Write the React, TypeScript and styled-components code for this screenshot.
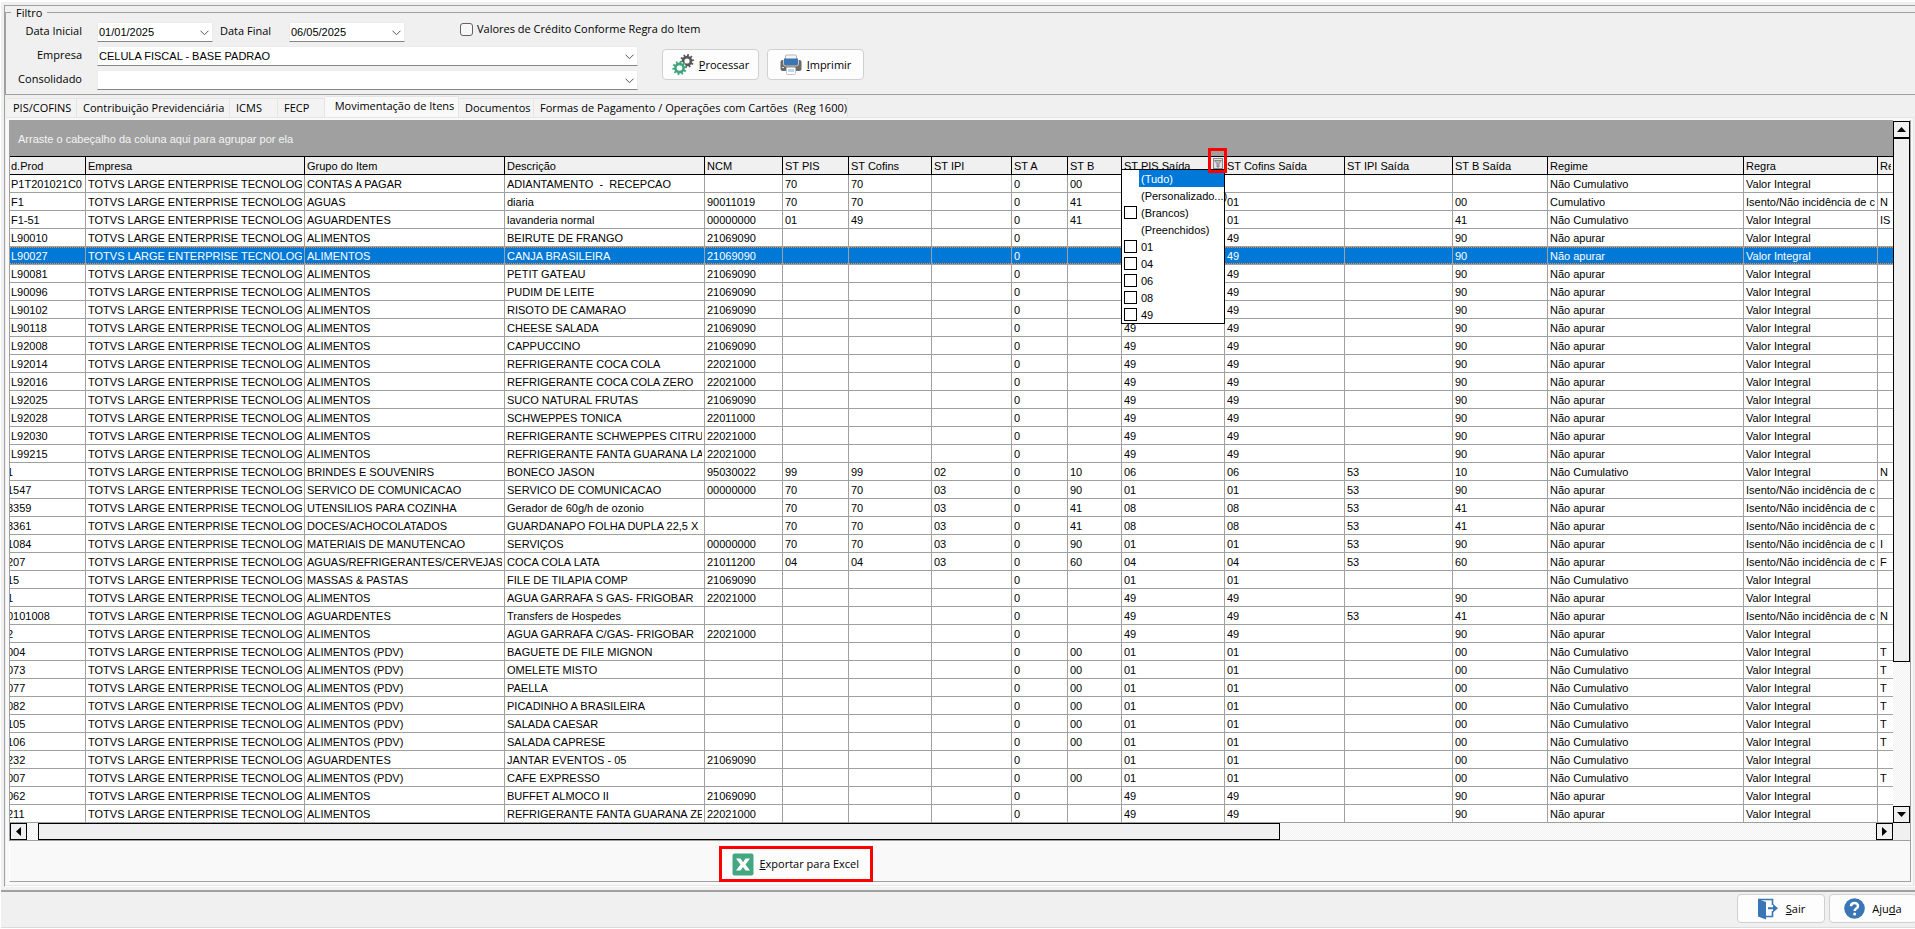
import React from "react";
import styled, { createGlobalStyle, css } from "styled-components";

const GRID_FONT = `"Liberation Sans", Arial, sans-serif`;
const UI_FONT = `"Open Sans", "Noto Sans", sans-serif`;
const LINE = "#a0a0a0";
const FACE = "#f0f0f0";

const GlobalStyle = createGlobalStyle`
  *, *::before, *::after { box-sizing: border-box; }
  body { margin: 0; background: #fff; color: #000; font: 11px/14px ${UI_FONT}; }
  button, input, select { font: inherit; color: inherit; }
`;

const Window = styled.div`
  display: flex;
  flex-direction: column;
  min-height: 100vh;
  padding: 2px 0 1px 1px;
  overflow: hidden;
`;

const Body = styled.main`
  display: flex;
  flex-direction: column;
  flex: 1;
  padding: 3px 0 3px 3px;
  background: ${FACE};
`;

const Sheet = styled.div`
  display: flex;
  flex-direction: column;
  flex: 1;
  border-top: 1px solid ${LINE};
  border-left: 1px solid ${LINE};
  border-bottom: 1px solid #fff;
`;

const FilterBox = styled.fieldset`
  margin: 0;
  padding: 3px 0 4px 5px;
  min-width: 0;
  border: 1px solid ${LINE};
  border-right: 0;
`;

const Legend = styled.legend`
  padding: 0 5px;
  line-height: 13px;
`;

const FilterGrid = styled.div`
  display: grid;
  grid-template-columns: 71px 541px auto;
  grid-template-rows: repeat(3, 20px);
  gap: 4px 15px;
  justify-content: start;
`;

const FieldLabel = styled.label`
  line-height: 18px;
  text-align: right;
  white-space: nowrap;
`;

const DateRow = styled.div`
  grid-column: 2 / 4;
  display: flex;
  align-items: flex-start;
  gap: 7px;
`;

const DateLabel = styled(FieldLabel)`
  width: 62px;
  text-align: left;
`;

const CheckLabel = styled.label`
  display: flex;
  align-items: center;
  gap: 4px;
  margin-left: 48px;
  white-space: nowrap;
`;

const CheckInput = styled.input`
  appearance: none;
  width: 13px;
  height: 13px;
  margin: 0;
  border: 1px solid #626262;
  border-radius: 3px;
  background: #f7f7f7;
`;

const SelectWrap = styled.div<{ $wide?: boolean }>`
  position: relative;
  width: ${(p) => (p.$wide ? "auto" : "116px")};
  height: 20px;
`;

const SelectInput = styled.select`
  appearance: none;
  display: block;
  width: 100%;
  height: 20px;
  padding: 0 20px 1px 1px;
  border: 1px solid #ececec;
  border-bottom-color: #868686;
  border-radius: 0;
  background: #fff;
  font: 11px/16px ${GRID_FONT};
`;

const Chevron = styled.svg`
  position: absolute;
  right: 4px;
  top: 8px;
  pointer-events: none;
`;

const ButtonRow = styled.div`
  grid-row: 2 / 4;
  grid-column: 3;
  display: flex;
  align-items: flex-start;
  gap: 8px;
  padding: 3px 0 0 9px;
`;

const PushButton = styled.button<{ $width: number; $height: number }>`
  flex: none;
  display: flex;
  align-items: center;
  justify-content: center;
  gap: 5px;
  width: ${(p) => p.$width}px;
  height: ${(p) => p.$height}px;
  padding: 0;
  border: 1px solid #d0d0d0;
  border-radius: 4px;
  background: #fdfdfd;
  white-space: nowrap;
`;

const Tabs = styled.div`
  display: flex;
  align-items: flex-end;
  height: 22px;
  padding-left: 2px;
`;

const Tab = styled.button<{ $active?: boolean; $width: number }>`
  flex: none;
  width: ${(p) => p.$width}px;
  height: ${(p) => (p.$active ? 21 : 19)}px;
  padding: 0 0 ${(p) => (p.$active ? 3 : 0)}px 6px;
  border: 1px solid #e5e5e5;
  border-left-width: 0;
  border-bottom: 0;
  background: ${(p) => (p.$active ? "#f9f9f9" : "#f3f3f3")};
  text-align: ${(p) => (p.$active ? "center" : "left")};
  white-space: pre;
`;

const TabPage = styled.section`
  display: flex;
  flex-direction: column;
  flex: 1;
  margin: 0 1px 0 1px;
  padding: 2px 2px 3px 3px;
  border: 1px solid #e5e5e5;
  border-left: 0;
  background: #f9f9f9;
`;

const GridFrame = styled.div`
  display: flex;
  border: 1px solid ${LINE};
  border-top: 0;
`;

const GridMain = styled.div`
  flex: 1;
  min-width: 0;
  display: flex;
  flex-direction: column;
`;

const GroupBar = styled.div`
  height: 36px;
  padding: 12px 8px 0;
  background: ${LINE};
  color: #f4f4f4;
  font: 11px/14px ${GRID_FONT};
`;

const Table = styled.table`
  width: 100%;
  table-layout: fixed;
  border-collapse: separate;
  border-spacing: 0;
  background: #fff;
  font: 11px/18px ${GRID_FONT};
`;

const Th = styled.th`
  position: relative;
  height: 19px;
  padding: 0;
  border-top: 1px solid #000;
  border-bottom: 1px solid #000;
  border-right: 1px solid #000;
  background: ${FACE};
  font-weight: normal;
  text-align: left;

  &:last-child { border-right: 0; }
`;

const Td = styled.td`
  height: 18px;
  padding: 0;
  border-right: 1px solid ${LINE};
  border-bottom: 1px solid ${LINE};

  &:last-child { border-right: 0; }
`;

const Row = styled.tr<{ $selected: boolean }>`
  ${(p) =>
    p.$selected &&
    css`
      color: #fff;
      td {
        background:
          repeating-linear-gradient(90deg, #ff8728 0 1px, #0078d7 1px 2px) top / 100% 1px no-repeat,
          repeating-linear-gradient(90deg, #ff8728 0 1px, #0078d7 1px 2px) bottom / 100% 1px no-repeat,
          #0078d7;
        background-clip: padding-box;
        background-origin: padding-box;
      }
    `}
`;

const CellText = styled.span<{ $first?: boolean; $cut?: boolean }>`
  display: block;
  height: 17px;
  margin: 0 2px 0 ${(p) => (p.$first ? 0 : 2)}px;
  text-indent: ${(p) => (p.$cut ? -3 : p.$first ? 1 : 0)}px;
  overflow: hidden;
  white-space: pre;
`;

const FilterMark = styled.span`
  position: absolute;
  z-index: 3;
  right: -3px;
  top: -9px;
  display: flex;
  align-items: flex-end;
  justify-content: center;
  width: 19px;
  height: 25px;
  padding-bottom: 1px;
  border: 3px solid #f00;
`;

const FilterButton = styled.button`
  display: flex;
  width: 10px;
  height: 11px;
  padding: 0;
  border: 1px solid #888;
  background: #e4e4e4;
`;

const FilterMenu = styled.div`
  position: absolute;
  z-index: 2;
  left: -1px;
  right: -1px;
  top: 12px;
  border: 1px solid #000;
  background: #fff;
`;

const FilterOption = styled.label<{ $active: boolean }>`
  display: flex;
  align-items: center;
  height: 17px;
  padding-left: 2px;
  ${(p) => p.$active && "color: #fff;"}

  span {
    flex: 1;
    height: 17px;
    padding-left: 2px;
    background: ${(p) => (p.$active ? "#0078d7" : "transparent")};
    white-space: nowrap;
  }
`;

const OptionCheck = styled.input`
  appearance: none;
  flex: none;
  width: 13px;
  height: 13px;
  margin: 0 2px 0 0;
  border: 1px solid #000;
  background: #fff;
`;

const OptionBlank = styled.i`
  flex: none;
  width: 15px;
`;

const track = css`
  background: repeating-conic-gradient(#fff 0 25%, #f0f0f0 0 50%) 0 0 / 2px 2px;
`;

const VerticalBar = styled.div`
  flex: none;
  display: flex;
  flex-direction: column;
  width: 17px;
  padding-top: 1px;
  ${track}
`;

const HorizontalBar = styled.div`
  display: flex;
  height: 17px;
  ${track}
`;

const ArrowButton = styled.button`
  flex: none;
  display: flex;
  align-items: center;
  justify-content: center;
  width: 17px;
  height: 17px;
  padding: 0;
  border: 1px solid #000;
  background: ${FACE};
`;

const VerticalTrack = styled.div`
  flex: 1;
`;

const VerticalThumb = styled.div`
  height: 78.5%;
  border: 1px solid #000;
  background: ${FACE};
`;

const HorizontalTrack = styled.div`
  flex: 1;
  padding-left: 11px;
`;

const HorizontalThumb = styled.div`
  width: 67.6%;
  height: 17px;
  border: 1px solid #000;
  background: ${FACE};
`;

const Corner = styled.div`
  height: 17px;
  background: ${FACE};
`;

const ExportBar = styled.div`
  display: flex;
  flex: 1;
  align-items: flex-end;
  min-height: 41px;
  padding-left: 37%;
  border: 1px solid ${LINE};
  border-top: 0;
  border-left-color: #fff;
`;

const ExportMark = styled.div`
  display: flex;
  margin: 0 0 -1px 5px;
  border: 3px solid #f00;
`;

const ExportButton = styled(PushButton)`
  border: 0;
  border-radius: 0;
`;

const Footer = styled.footer`
  display: flex;
  flex: none;
  justify-content: flex-end;
  align-items: center;
  height: 38px;
  padding-bottom: 2px;
  border-top: 2px solid ${LINE};
  border-bottom: 1px solid #dcdcdc;
  background: ${FACE};
`;

const FooterButtons = styled.div`
  display: flex;
  gap: 4px;
  margin-right: -2px;
`;

const FooterButton = styled(PushButton)`
  gap: 7px;
`;

const widths = [76, 219, 200, 200, 78, 66, 83, 80, 56, 54, 103, 120, 108, 95, 196, 134];

const headers = [
  "d.Prod", "Empresa", "Grupo do Item", "Descrição", "NCM", "ST PIS", "ST Cofins", "ST IPI", "ST A", "ST B",
  "ST PIS Saída", "ST Cofins Saída", "ST IPI Saída", "ST B Saída", "Regime", "Regra", "Re",
];

const COMPANY = "TOTVS LARGE ENTERPRISE TECNOLOGIA";
const NC = "Não Cumulativo";
const NA = "Não apurar";
const VI = "Valor Integral";
const IS = "Isento/Não incidência de c";

// code | group | description | NCM | PIS | Cofins | IPI | A | B | PIS out | Cofins out | IPI out | B out | regime | rule | Re
const items = [
  `P1T201021C01|CONTAS A PAGAR|ADIANTAMENTO  -  RECEPCAO||70|70||0|00|||||${NC}|${VI}|`,
  `F1|AGUAS|diaria|90011019|70|70||0|41|01|01||00|Cumulativo|${IS}|N`,
  `F1-51|AGUARDENTES|lavanderia normal|00000000|01|49||0|41|01|01||41|${NC}|${VI}|ISS`,
  ...[
    "L90010|BEIRUTE DE FRANGO|21069090",
    "L90027|CANJA BRASILEIRA|21069090",
    "L90081|PETIT GATEAU|21069090",
    "L90096|PUDIM DE LEITE|21069090",
    "L90102|RISOTO DE CAMARAO|21069090",
    "L90118|CHEESE SALADA|21069090",
    "L92008|CAPPUCCINO|21069090",
    "L92014|REFRIGERANTE COCA COLA|22021000",
    "L92016|REFRIGERANTE COCA COLA ZERO|22021000",
    "L92025|SUCO NATURAL FRUTAS|21069090",
    "L92028|SCHWEPPES TONICA|22011000",
    "L92030|REFRIGERANTE SCHWEPPES CITRUS|22021000",
    "L99215|REFRIGERANTE FANTA GUARANA LA|22021000",
  ].map((s) => {
    const [code, name, ncm] = s.split("|");
    return `${code}|ALIMENTOS|${name}|${ncm}||||0||49|49||90|${NA}|${VI}|`;
  }),
  `1|BRINDES E SOUVENIRS|BONECO JASON|95030022|99|99|02|0|10|06|06|53|10|${NC}|${VI}|N`,
  `1547|SERVICO DE COMUNICACAO|SERVICO DE COMUNICACAO|00000000|70|70|03|0|90|01|01|53|90|${NA}|${IS}|`,
  `3359|UTENSILIOS PARA COZINHA|Gerador de 60g/h de ozonio||70|70|03|0|41|08|08|53|41|${NA}|${IS}|`,
  `3361|DOCES/ACHOCOLATADOS|GUARDANAPO FOLHA DUPLA 22,5 X 2||70|70|03|0|41|08|08|53|41|${NA}|${IS}|`,
  `1084|MATERIAIS DE MANUTENCAO|SERVIÇOS|00000000|70|70|03|0|90|01|01|53|90|${NA}|${IS}|I`,
  `207|AGUAS/REFRIGERANTES/CERVEJAS|COCA COLA LATA|21011200|04|04|03|0|60|04|04|53|60|${NA}|${IS}|F`,
  `15|MASSAS & PASTAS|FILE DE TILAPIA COMP|21069090||||0||01|01|||${NC}|${VI}|`,
  `1|ALIMENTOS|AGUA GARRAFA S GAS- FRIGOBAR|22021000||||0||49|49||90|${NA}|${VI}|`,
  `0101008|AGUARDENTES|Transfers de Hospedes|||||0||49|49|53|41|${NA}|${IS}|N`,
  `2|ALIMENTOS|AGUA GARRAFA C/GAS- FRIGOBAR|22021000||||0||49|49||90|${NA}|${VI}|`,
  `004|ALIMENTOS (PDV)|BAGUETE DE FILE MIGNON|||||0|00|01|01||00|${NC}|${VI}|T`,
  `073|ALIMENTOS (PDV)|OMELETE MISTO|||||0|00|01|01||00|${NC}|${VI}|T`,
  `077|ALIMENTOS (PDV)|PAELLA|||||0|00|01|01||00|${NC}|${VI}|T`,
  `082|ALIMENTOS (PDV)|PICADINHO A BRASILEIRA|||||0|00|01|01||00|${NC}|${VI}|T`,
  `105|ALIMENTOS (PDV)|SALADA CAESAR|||||0|00|01|01||00|${NC}|${VI}|T`,
  `106|ALIMENTOS (PDV)|SALADA CAPRESE|||||0|00|01|01||00|${NC}|${VI}|T`,
  `232|AGUARDENTES|JANTAR EVENTOS - 05|21069090||||0||01|01||00|${NC}|${VI}|`,
  `007|ALIMENTOS (PDV)|CAFE EXPRESSO|||||0|00|01|01||00|${NC}|${VI}|T`,
  `062|ALIMENTOS|BUFFET ALMOCO II|21069090||||0||49|49||90|${NA}|${VI}|`,
  `211|ALIMENTOS|REFRIGERANTE FANTA GUARANA ZE|22021000||||0||49|49||90|${NA}|${VI}|`,
].map((s) => {
  const [code, ...rest] = s.split("|");
  return [code, COMPANY, ...rest];
});

const options: [string, boolean][] = [
  ["(Tudo)", false], ["(Personalizado...)", false], ["(Brancos)", true], ["(Preenchidos)", false],
  ["01", true], ["04", true], ["06", true], ["08", true], ["49", true],
];

const tabs: [string, number][] = [
  ["PIS/COFINS", 70], ["Contribuição Previdenciária", 153], ["ICMS", 48], ["FECP", 47],
  ["Movimentação de Itens", 134], ["Documentos", 75], ["Formas de Pagamento / Operações com Cartões  (Reg 1600)", 314],
];

function ComboBox({ id, value, wide }: { id: string; value: string; wide?: boolean }) {
  return (
    <SelectWrap $wide={wide}>
      <SelectInput id={id} defaultValue={value}>
        <option value={value}>{value}</option>
      </SelectInput>
      <Chevron width="9" height="6" viewBox="0 0 9 6">
        <path d="M.5 .7 4.5 4.7 8.5 .7" fill="none" stroke="#555" />
      </Chevron>
    </SelectWrap>
  );
}

function Arrow({ d }: { d: string }) {
  return (
    <svg width="9" height="9" viewBox="0 0 9 9">
      <path d={d} />
    </svg>
  );
}

function Gear({ cx, cy, r, color }: { cx: number; cy: number; r: number; color: string }) {
  return (
    <g stroke={color} fill="none">
      <circle cx={cx} cy={cy} r={r} strokeWidth="2.6" />
      {Array.from({ length: 10 }, (_, i) => (
        <line
          key={i}
          x1={cx} x2={cx} y1={cy - r - 0.6} y2={cy - r - 3}
          strokeWidth="1.8"
          transform={`rotate(${i * 36 + 10} ${cx} ${cy})`}
        />
      ))}
    </g>
  );
}

const GearsIcon = () => (
  <svg width="22" height="22" viewBox="0 0 22 22">
    <Gear cx={15} cy={7} r={3.9} color="#585858" />
    <circle cx="7.5" cy="14" r="6.6" fill="#fdfdfd" />
    <Gear cx={7.5} cy={14} r={4.1} color="#3ea57b" />
  </svg>
);

const PrinterIcon = () => (
  <svg width="22" height="22" viewBox="0 0 22 22">
    <rect x="5.5" y="1" width="11" height="5" rx="1" fill="#f4f4f4" stroke="#b5b5b5" />
    <rect x="0.5" y="6" width="21" height="11" rx="2" fill="#6b6b6b" />
    <path d="M4 4.500h14V9.500a1.500 1.500 0 0 1-1.500 1.500h-11A1.500 1.500 0 0 1 4 9.500z" fill="#3a75b5" />
    <path d="M3.500 6v4a2 2 0 0 0 2 2h11a2 2 0 0 0 2-2V6" fill="none" stroke="#c9c9c9" />
    <rect x="6.500" y="13.500" width="9" height="7" rx="1" fill="#fff" stroke="#c4c4c4" />
    <rect x="8" y="15" width="6" height="3" fill="#b9d6f2" />
    <rect x="2" y="13" width="2" height="1" fill="#ddd" />
  </svg>
);

const ExcelIcon = () => (
  <svg width="22" height="23" viewBox="0 0 22 23">
    <rect x="0.5" y="0.5" width="21" height="22" rx="2" fill="#43a881" />
    <path d="M4 5.500h4.500L11 9.200l2.500-3.700H18l-4.500 6 4.500 6h-4.500L11 14l-2.500 3.500H4l4.500-6z" fill="#fff" />
  </svg>
);

const ExitIcon = () => (
  <svg width="22" height="22" viewBox="0 0 22 22">
    <path d="M1 1l8 3v17.500l-8-3z" fill="#3a75b5" />
    <path d="M1 1.500h14.500V7M15.500 13v5.500H9" fill="none" stroke="#3a75b5" strokeWidth="1.600" />
    <path d="M11 9.200h5V6l5 4.300-5 4.200V11.300h-5z" fill="#3a75b5" />
  </svg>
);

const HelpIcon = () => (
  <svg width="21" height="21" viewBox="0 0 21 21">
    <circle cx="10.500" cy="10.500" r="10.300" fill="#3a75b5" />
    <path d="M7 8.200C7 4 14 4 14 8c0 2.600-3.400 2.600-3.400 5" fill="none" stroke="#fff" strokeWidth="2.500" />
    <circle cx="10.600" cy="15.900" r="1.500" fill="#fff" />
  </svg>
);

function ColumnFilter() {
  return (
    <>
      <FilterMark>
        <FilterButton aria-label="Filtrar">
          <svg width="8" height="9" viewBox="0 0 8 9">
            <path d="M.5 1.500h7L5 4.500V8H3V4.500z" fill="#b8b8b8" stroke="#777" strokeWidth=".8" />
          </svg>
        </FilterButton>
      </FilterMark>
      <FilterMenu>
        {options.map(([text, hasBox], i) => (
          <FilterOption key={text} $active={i === 0}>
            {hasBox ? <OptionCheck type="checkbox" /> : <OptionBlank />}
            <span>{text}</span>
          </FilterOption>
        ))}
      </FilterMenu>
    </>
  );
}

export default function App() {
  return (
    <Window>
      <GlobalStyle />
      <Body>
        <Sheet>
          <FilterBox>
            <Legend>Filtro</Legend>
            <FilterGrid>
              <FieldLabel htmlFor="inicio">Data Inicial</FieldLabel>
              <DateRow>
                <ComboBox id="inicio" value="01/01/2025" />
                <DateLabel htmlFor="fim">Data Final</DateLabel>
                <ComboBox id="fim" value="06/05/2025" />
                <CheckLabel>
                  <CheckInput type="checkbox" />
                  Valores de Crédito Conforme Regra do Item
                </CheckLabel>
              </DateRow>
              <FieldLabel htmlFor="empresa">Empresa</FieldLabel>
              <ComboBox id="empresa" value="CELULA FISCAL - BASE PADRAO" wide />
              <ButtonRow>
                <PushButton $width={97} $height={31}>
                  <GearsIcon />
                  <span><u>P</u>rocessar</span>
                </PushButton>
                <PushButton $width={97} $height={31}>
                  <PrinterIcon />
                  <span><u>I</u>mprimir</span>
                </PushButton>
              </ButtonRow>
              <FieldLabel htmlFor="consolidado">Consolidado</FieldLabel>
              <ComboBox id="consolidado" value="" wide />
            </FilterGrid>
          </FilterBox>
          <Tabs role="tablist">
            {tabs.map(([text, width], i) => (
              <Tab key={text} role="tab" aria-selected={i === 4} $active={i === 4} $width={width}>
                {text}
              </Tab>
            ))}
          </Tabs>
          <TabPage>
            <GridFrame>
              <GridMain>
                <GroupBar>Arraste o cabeçalho da coluna aqui para agrupar por ela</GroupBar>
                <Table>
                  <colgroup>
                    {widths.map((w, i) => (
                      <col key={i} style={{ width: w }} />
                    ))}
                    <col />
                  </colgroup>
                  <thead>
                    <tr>
                      {headers.map((h, i) => (
                        <Th key={h}>
                          <CellText $first={i === 0}>{h}</CellText>
                          {i === 10 && <ColumnFilter />}
                        </Th>
                      ))}
                    </tr>
                  </thead>
                  <tbody>
                    {items.map((cells, r) => (
                      <Row key={r} $selected={r === 4}>
                        {cells.map((text, c) => (
                          <Td key={c}>
                            <CellText $first={c === 0} $cut={c === 0 && /^\d/.test(text)}>{text}</CellText>
                          </Td>
                        ))}
                      </Row>
                    ))}
                  </tbody>
                </Table>
                <HorizontalBar>
                  <ArrowButton aria-label="Rolar para a esquerda"><Arrow d="M7 0v9L2 4.500z" /></ArrowButton>
                  <HorizontalTrack><HorizontalThumb /></HorizontalTrack>
                  <ArrowButton aria-label="Rolar para a direita"><Arrow d="M2 0v9l5-4.500z" /></ArrowButton>
                </HorizontalBar>
              </GridMain>
              <VerticalBar>
                <ArrowButton aria-label="Rolar para cima"><Arrow d="M0 7h9L4.500 2z" /></ArrowButton>
                <VerticalTrack><VerticalThumb /></VerticalTrack>
                <ArrowButton aria-label="Rolar para baixo"><Arrow d="M0 2h9L4.500 7z" /></ArrowButton>
                <Corner />
              </VerticalBar>
            </GridFrame>
            <ExportBar>
              <ExportMark>
                <ExportButton $width={148} $height={30}>
                  <ExcelIcon />
                  <span><u>E</u>xportar para Excel</span>
                </ExportButton>
              </ExportMark>
            </ExportBar>
          </TabPage>
        </Sheet>
      </Body>
      <Footer>
        <FooterButtons>
          <FooterButton $width={88} $height={29}>
            <ExitIcon />
            <span><u>S</u>air</span>
          </FooterButton>
          <FooterButton $width={88} $height={29}>
            <HelpIcon />
            <span>Aju<u>d</u>a</span>
          </FooterButton>
        </FooterButtons>
      </Footer>
    </Window>
  );
}
